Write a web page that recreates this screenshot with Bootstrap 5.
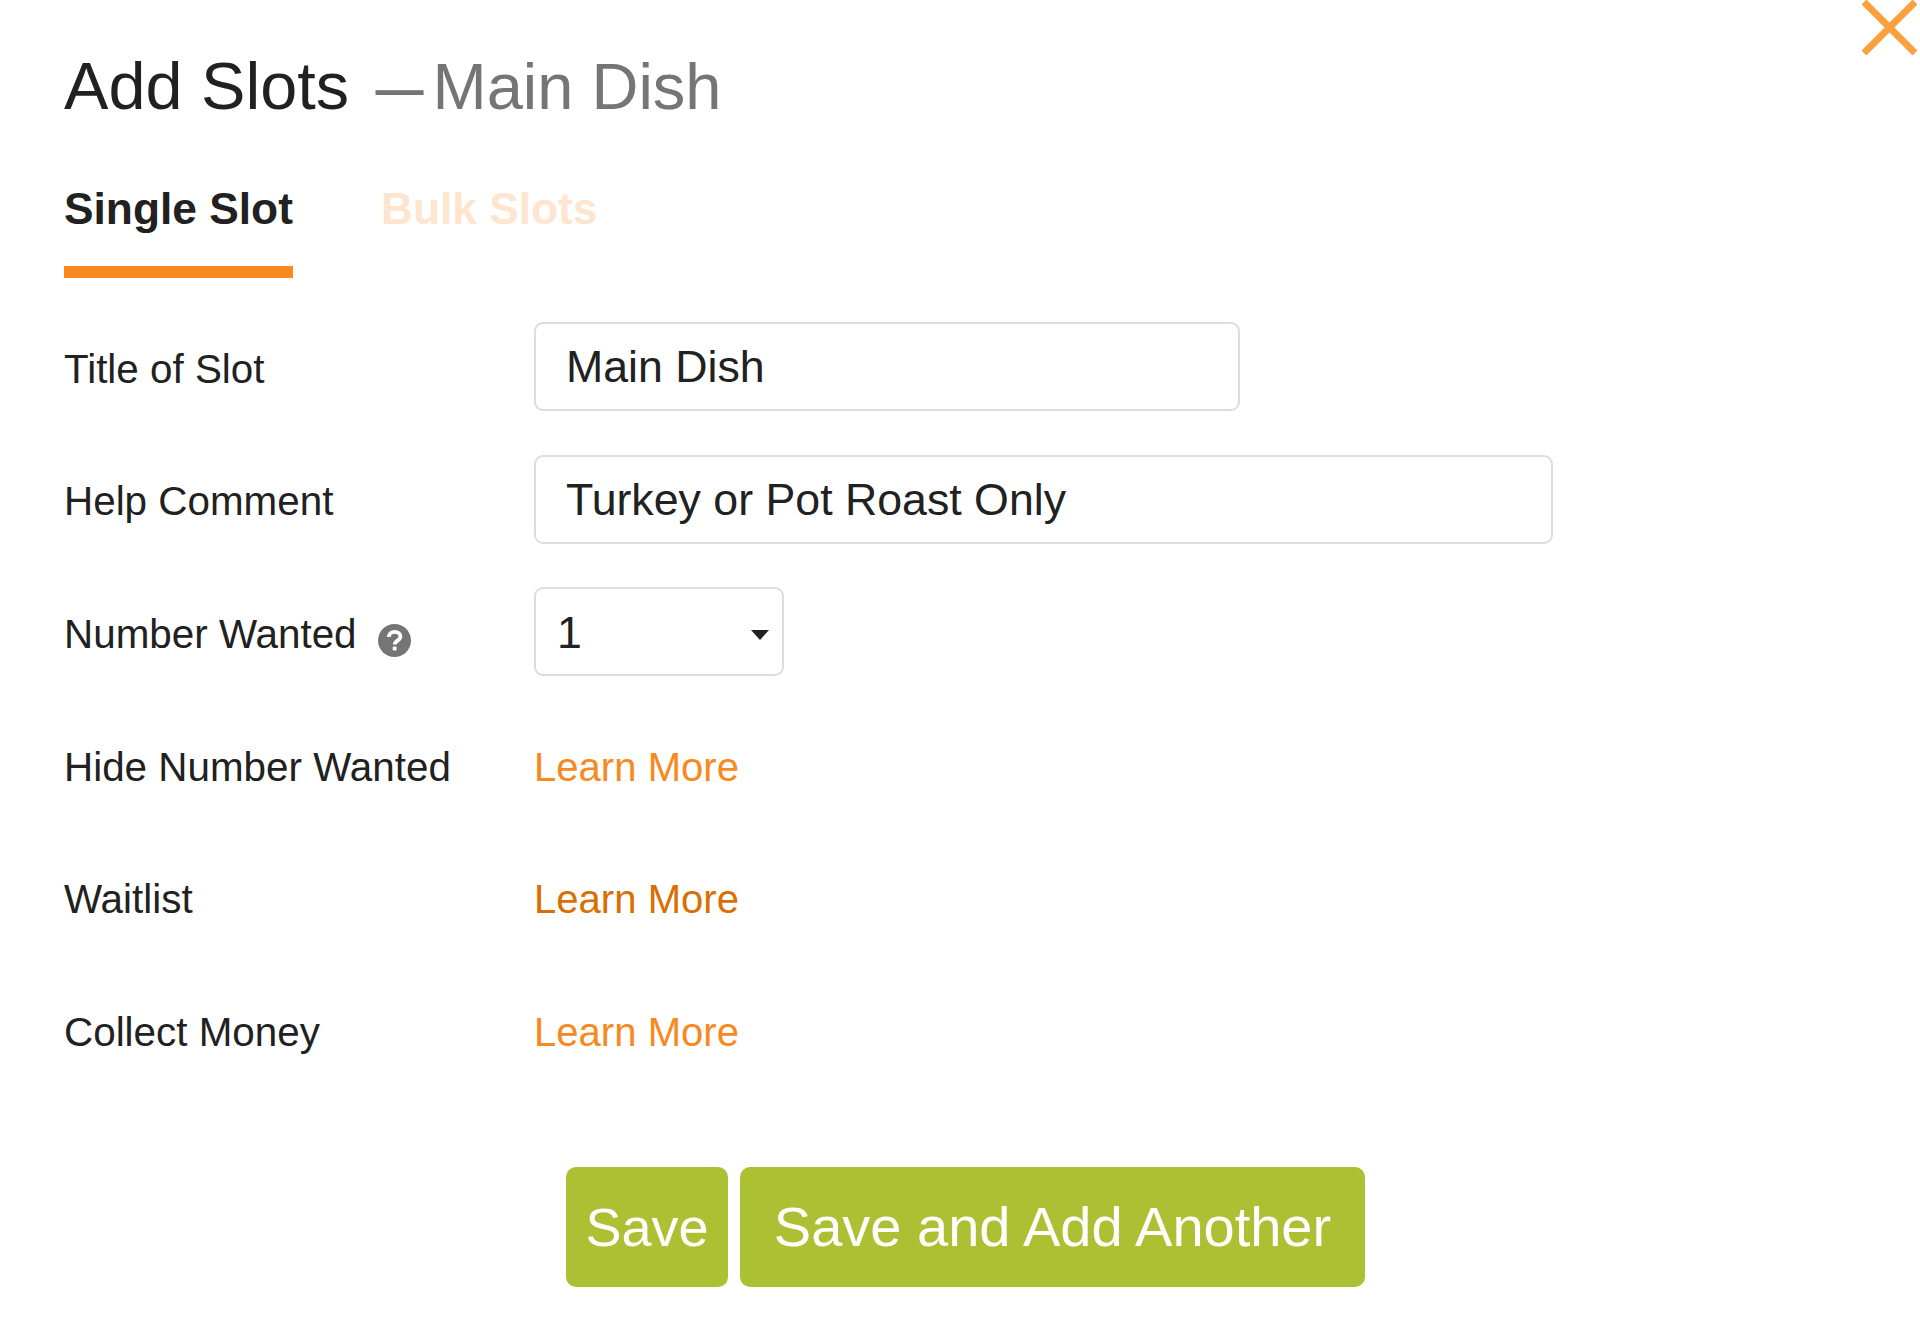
<!DOCTYPE html>
<html lang="en">
<head>
<meta charset="utf-8">
<title>Add Slots</title>
<link href="https://cdn.jsdelivr.net/npm/bootstrap@5.3.0/dist/css/bootstrap.min.css" rel="stylesheet">
<style>
html, body { background: #fff; }
body { font-family: "Liberation Sans", Arial, sans-serif; color: #212121; min-height: 1332px; overflow: hidden; }
.sheet { padding: 45px 0 0 64px; position: relative; height: 1332px; }
.closer { position: absolute; top: 0; right: 3px; width: 55px; height: 55px; padding: 0; background: none; border: 0; line-height: 0; }
.closer svg { display: block; }
.head-line { font-size: 66.6px; line-height: 82px; font-weight: 400; margin: 0; color: #212121; }
.head-sub { color: #757575; font-size: 65px; }
.head-dash { font-size: 48px; font-weight: 700; margin-left: 8px; margin-right: 9px; vertical-align: 3px; }
.tabset { gap: 88px; margin-top: 52px; margin-bottom: 44px; border: 0; }
.tabset .nav-link { padding: 0; font-size: 44.3px; line-height: 52px; font-weight: 700; background: none; border: 0; border-radius: 0; height: 95px; }
.tabset .nav-link.active { color: #212121; background: none; border-bottom: 12px solid #f7891f; }
.tabset .nav-link.dim { color: #fde5cf; }
.fld-row { height: 89px; margin-bottom: 43.7px; }
.fld-label { width: 470px; font-size: 40.4px; line-height: 52px; padding-top: 4px; margin: 0; color: #212121; flex: none; }
.fld-input { height: 89px; font-size: 44.7px; line-height: 52px; color: #212121; border: 2.5px solid #ddd; border-radius: 9px; padding: 1px 30px 0; box-shadow: none; }
.w-short { width: 706px; }
.w-long { width: 1019px; }
.fld-select { width: 250px; height: 89px; font-size: 44.7px; color: #212121; border: 2.5px solid #ddd; border-radius: 9px; padding: 2px 40px 0 21px; background-size: 18px 10px; background-position: right 13px top 41px; background-image: url("data:image/svg+xml,%3Csvg xmlns='http://www.w3.org/2000/svg' viewBox='0 0 18 10'%3E%3Cpath fill='%23212121' d='M0 0h18L9 10z'/%3E%3C/svg%3E"); }
.fld-link { font-size: 40.1px; line-height: 52px; padding-top: 4px; color: #f7891f; text-decoration: none; }
.fld-link.seen { color: #d96f00; }
.help-dot { width: 33px; height: 33px; margin-left: 21px; vertical-align: -9px; }
.act-btn { height: 120px; font-size: 54px; line-height: 1; color: #fff; background: #abc032; border: 0; border-radius: 10px; padding: 0; width: 162px; }
.act-btn.wide { width: 625px; font-size: 56px; }
.act-row { gap: 12px; padding-left: 502px; margin-top: 93px; }
</style>
</head>
<body>
<div class="sheet">
  <button type="button" class="closer" aria-label="Close">
    <svg width="55" height="55" viewBox="0 0 55 55"><path d="M2 2 53 53M53 2 2 53" stroke="#f9a13f" stroke-width="7" fill="none"/></svg>
  </button>
  <h1 class="head-line">Add Slots <span class="head-sub"><span class="head-dash">—</span>Main Dish</span></h1>
  <ul class="nav tabset">
    <li class="nav-item"><a class="nav-link active" href="#">Single Slot</a></li>
    <li class="nav-item"><a class="nav-link dim" href="#">Bulk Slots</a></li>
  </ul>
  <form>
    <div class="d-flex align-items-center fld-row">
      <label class="fld-label" for="slotTitle">Title of Slot</label>
      <input id="slotTitle" class="form-control fld-input w-short" type="text" value="Main Dish">
    </div>
    <div class="d-flex align-items-center fld-row">
      <label class="fld-label" for="slotHelp">Help Comment</label>
      <input id="slotHelp" class="form-control fld-input w-long" type="text" value="Turkey or Pot Roast Only">
    </div>
    <div class="d-flex align-items-center fld-row">
      <label class="fld-label" for="slotNum">Number Wanted<svg class="help-dot" viewBox="0 0 33 33"><circle cx="16.5" cy="16.5" r="16.5" fill="#757575"/><path d="M10.800 13c.2-3.300 2.600-5.200 5.900-5.200 3.400 0 5.700 2 5.700 4.700 0 4.300-5.600 4-5.600 8" fill="none" stroke="#fff" stroke-width="3.800"/><rect x="14.700" y="22.500" width="3.900" height="3.900" rx="1" fill="#fff"/></svg></label>
      <select id="slotNum" class="form-select fld-select"><option>1</option></select>
    </div>
    <div class="d-flex align-items-center fld-row">
      <span class="fld-label">Hide Number Wanted</span>
      <a class="fld-link" href="#">Learn More</a>
    </div>
    <div class="d-flex align-items-center fld-row">
      <span class="fld-label">Waitlist</span>
      <a class="fld-link seen" href="#">Learn More</a>
    </div>
    <div class="d-flex align-items-center fld-row">
      <span class="fld-label">Collect Money</span>
      <a class="fld-link" href="#">Learn More</a>
    </div>
    <div class="d-flex act-row">
      <button type="button" class="btn act-btn">Save</button>
      <button type="button" class="btn act-btn wide">Save and Add Another</button>
    </div>
  </form>
</div>
<script src="https://cdn.jsdelivr.net/npm/bootstrap@5.3.0/dist/js/bootstrap.bundle.min.js"></script>
</body>
</html>
